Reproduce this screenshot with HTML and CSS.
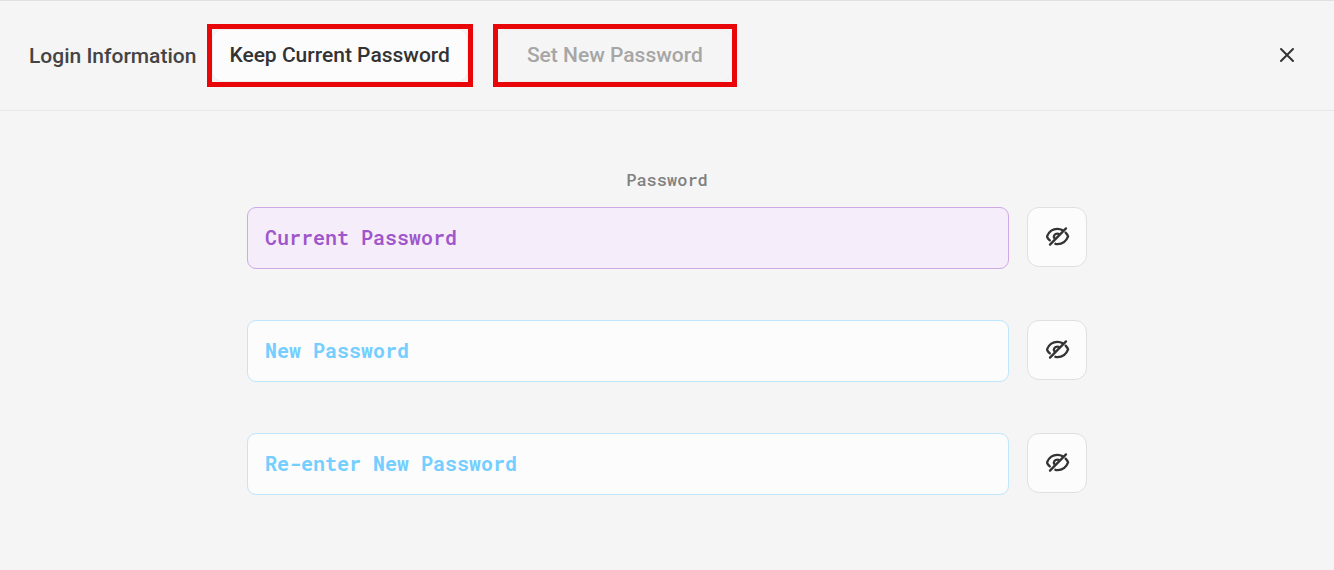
FILE: index.html
```html
<!DOCTYPE html>
<html lang="en">
<head>
    <meta charset="UTF-8">
    <meta name="viewport" content="width=device-width, initial-scale=1.0">
    <title>Login Information</title>
    <link rel="stylesheet" href="styles.css">
</head>
<body>
<svg class="sprite" aria-hidden="true">
    <symbol id="eye-off" viewBox="6.6 7 26 26">
        <path d="M12.4 23.4C10.6 21.8 9.4 20.2 9.8 19C11.6 14.8 15.5 11.9 20 11.9C22 11.9 23.8 12.4 25.3 13.3"/>
        <path d="M17 21.2C15.6 18.9 17.3 16.6 20 16.6C20.8 16.6 21.4 16.8 21.8 17.2"/>
        <path d="M12.6 27.6L28.6 11.4"/>
        <path d="M28.2 15.6C29.4 16.8 30.3 18.2 30.7 19.4C29 24 24.8 27.1 20 27.1C19.2 27.1 18.6 27 18 26.8"/>
    </symbol>
</svg>

<header class="header">
    <h1 class="title">Login Information</h1>

    <div class="modes">
        <div class="highlight">
            <button type="button" class="mode active">Keep Current Password</button>
        </div>
        <div class="highlight">
            <button type="button" class="mode mode-new">Set New Password</button>
        </div>
    </div>

    <button type="button" class="close" aria-label="Close">
        <svg viewBox="0 0 24 24"><path d="M6 6l12 12M18 6L6 18"/></svg>
    </button>
</header>

<main>
    <form class="password-form">
        <label class="label" for="currentPassword">Password</label>

        <div class="row">
            <input type="password" class="field current" id="currentPassword" placeholder="Current Password">
            <button type="button" class="toggle" aria-label="Show current password">
                <svg><use href="#eye-off"/></svg>
            </button>
        </div>

        <div class="row">
            <input type="password" class="field" id="newPassword" placeholder="New Password" aria-label="New Password">
            <button type="button" class="toggle" aria-label="Show new password">
                <svg><use href="#eye-off"/></svg>
            </button>
        </div>

        <div class="row">
            <input type="password" class="field" id="repeatPassword" placeholder="Re-enter New Password" aria-label="Re-enter New Password">
            <button type="button" class="toggle" aria-label="Show re-entered password">
                <svg><use href="#eye-off"/></svg>
            </button>
        </div>
    </form>
</main>

<script>
    // Show / hide the password next to each button
    document.querySelectorAll('.toggle').forEach(btn => {
        btn.addEventListener('click', () => {
            const input = btn.previousElementSibling;
            input.type = input.type === 'password' ? 'text' : 'password';
        });
    });
</script>
</body>
</html>
```

FILE: styles.css
```css
* {
    margin: 0;
    padding: 0;
    box-sizing: border-box;
}

body {
    font-family: Roboto, 'Liberation Sans', sans-serif;
    background: #f5f5f5;
    color: #333333;
}

button {
    font-family: inherit;
    cursor: pointer;
}

svg {
    fill: none;
    stroke: #333333;
    stroke-width: 2;
    stroke-linecap: round;
    stroke-linejoin: round;
}

.sprite {
    display: none;
}

/* Header */
.header {
    display: flex;
    align-items: center;
    padding: 23px 32px 23px 29px;
    border-top: 1px solid #e0e0e0;
    border-bottom: 1px solid #e8e8e8;
}

.title {
    font-size: 21px;
    line-height: 24px;
    font-weight: 500;
    color: #444444;
}

.modes {
    display: flex;
    gap: 20px;
    margin-left: 11px;
}

.highlight {
    border: 5px solid #e90609;
}

.mode {
    height: 53px;
    padding: 0 17px 2px 16px;
    border: 1px solid #eeeeee;
    border-radius: 10px;
    background: #f5f5f5;
    font-size: 21px;
    font-weight: 500;
    color: #a6a6a6;
}

.mode-new {
    padding: 0 28px 2px;
}

.mode.active {
    background: #fcfcfc;
    color: #333333;
}

.close {
    height: 30px;
    width: 30px;
    margin-left: auto;
    padding-bottom: 2px;
    border: none;
    background: none;
}

.close svg {
    display: block;
    width: 24px;
    height: 24px;
    margin: auto;
}

/* Form */
.password-form {
    display: flex;
    flex-direction: column;
    max-width: 880px;
    margin: 0 auto;
    padding: 57px 20px;
}

.label {
    margin-bottom: 15px;
    text-align: center;
    font-family: 'Roboto Mono', 'DejaVu Sans Mono', monospace;
    font-size: 17px;
    line-height: 24px;
    font-weight: 500;
    color: #808080;
}

.row {
    display: flex;
    gap: 18px;
    margin-bottom: 51px;
}

.row:last-child {
    margin-bottom: 0;
}

.field {
    flex: 1;
    min-width: 0;
    height: 62px;
    padding: 0 17px 2px;
    border: 1px solid #bfe6fd;
    border-radius: 9px;
    background: #fcfcfc;
    font-family: 'Roboto Mono', 'DejaVu Sans Mono', monospace;
    font-size: 20px;
    font-weight: 700;
    color: #74ceff;
    outline: none;
}

.field::placeholder {
    color: #74ceff;
    opacity: 1;
}

.field.current {
    border-color: #cfa9e6;
    background: #f5edfa;
    font-weight: 600;
    color: #9f56cb;
}

.field.current::placeholder {
    color: #9f56cb;
}

.toggle {
    width: 60px;
    height: 60px;
    border: 1px solid #e0e0e0;
    border-radius: 12px;
    background: #fcfcfc;
}

.toggle svg {
    display: block;
    width: 26px;
    height: 26px;
    margin: auto;
    stroke-width: 2.3;
}
```
